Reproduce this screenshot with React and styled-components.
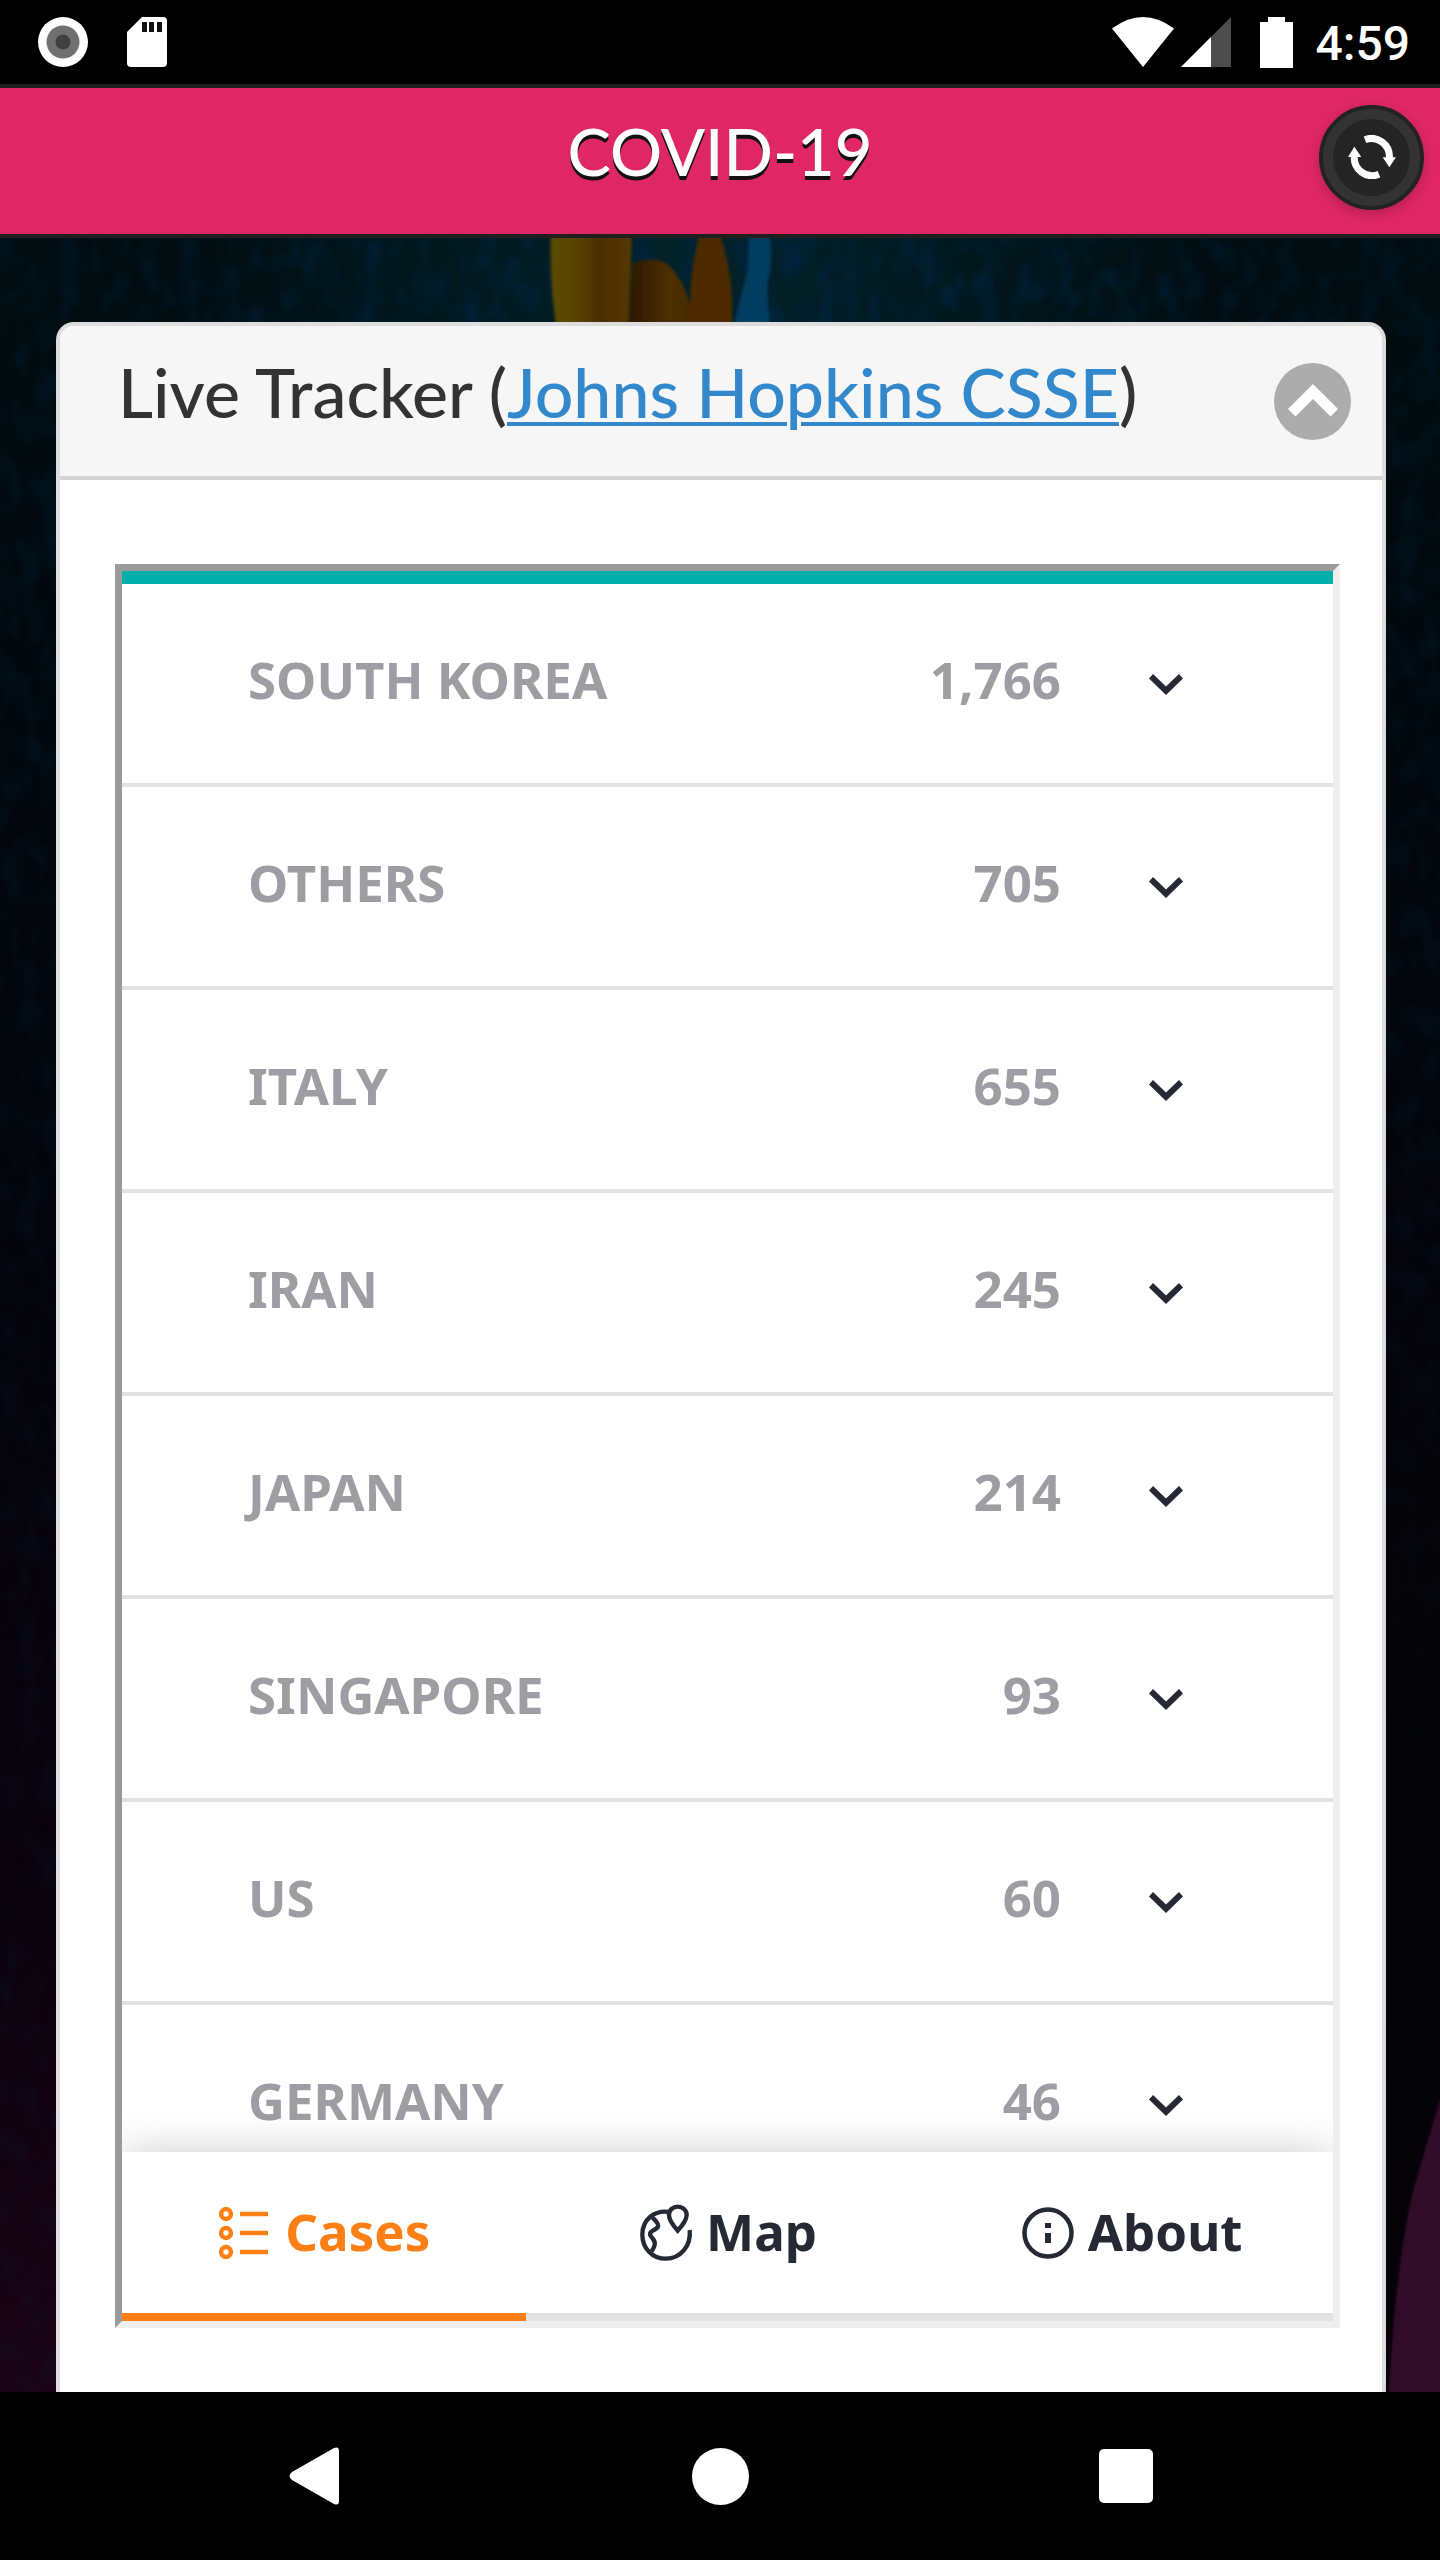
import React, { useState } from "react";
import styled, { createGlobalStyle } from "styled-components";

const colors = {
  pink: "#df2765",
  edge: "#1f1f1f",
  teal: "#00aeaa",
  orange: "#ff7f17",
  ink: "#242933",
  muted: "#9d9da3",
  line: "#e1e3e3",
};

const GlobalStyle = createGlobalStyle`
  *, *::before, *::after { box-sizing: border-box; }
  body { margin: 0; background: #000; }
  button { margin: 0; padding: 0; border: 0; background: none; color: inherit; font: inherit; }
  svg { display: block; }
`;

const Screen = styled.div`
  display: flex;
  flex-direction: column;
  height: 100vh;
  background: #000;
  font-family: "Noto Sans", "Open Sans", sans-serif;
`;

const StatusBar = styled.div`
  flex: none;
  display: flex;
  justify-content: space-between;
  height: 84px;
  padding: 0 30px 0 38px;
  color: #fff;
`;

const StatusGroup = styled.div`
  display: flex;
  align-items: center;
  gap: ${(p) => p.$gap}px;
`;

const Clock = styled.time`
  padding: 4px 0 0 14px;
  font: 500 48px/56px Roboto, sans-serif;
`;

const Header = styled.header`
  flex: none;
  display: grid;
  grid-template-columns: 1fr auto 1fr;
  align-items: center;
  height: 154px;
  padding: 0 16px;
  border-top: 4px solid ${colors.edge};
  border-bottom: 4px solid ${colors.edge};
  background: ${colors.pink};
`;

const Title = styled.h1`
  grid-column: 2;
  margin: 0;
  padding-bottom: 20px;
  color: #fff;
  font: 500 65px/80px Lato, sans-serif;
  text-shadow: 0 4px 0 #111;
`;

const RefreshButton = styled.button`
  justify-self: end;
  display: grid;
  place-items: center;
  width: 105px;
  height: 105px;
  margin-top: -8px;
  border: 4px solid #222;
  border-radius: 50%;
  background: radial-gradient(circle, #242424 38px, #333 39px);
  box-shadow: 0 4px 12px rgba(0, 0, 0, 0.2);
`;

const Main = styled.main`
  position: relative;
  flex: 1 1 0;
  display: flex;
  min-height: 0;
  padding: 84px 54px 0 56px;
  overflow: hidden;
`;

const Backdrop = styled.svg`
  position: absolute;
  inset: 0;
  width: 100%;
  height: 100%;
`;

const Card = styled.section`
  position: relative;
  flex: 1;
  display: flex;
  flex-direction: column;
  min-width: 0;
  border: 4px solid #ddd;
  border-bottom: 0;
  border-radius: 18px 18px 0 0;
  background: #fff;
  overflow: hidden;
`;

const CardHead = styled.div`
  flex: none;
  display: flex;
  align-items: center;
  justify-content: space-between;
  height: 154px;
  padding: 0 31px 0 58px;
  border-bottom: 4px solid #d3d3d3;
  background: #f6f6f6;
`;

const CardTitle = styled.h2`
  margin: 0;
  padding-bottom: 18px;
  color: #333;
  font: 500 68px/80px Lato, sans-serif;
  white-space: nowrap;
`;

const SourceLink = styled.a`
  color: #3388cc;
  text-decoration-thickness: 4px;
  text-underline-offset: 4px;
`;

const CollapseButton = styled.button`
  display: grid;
  place-items: center;
  width: 77px;
  height: 77px;
  border-radius: 50%;
  background: #acacac;
`;

const CardBody = styled.div`
  flex: 1;
  display: flex;
  min-height: 0;
  padding: 84px 42px 64px 55px;
`;

const Frame = styled.div`
  flex: 1;
  display: flex;
  flex-direction: column;
  min-width: 0;
  border: 7px solid;
  border-color: #9a9a9a #eee #eee #9a9a9a;
  overflow: hidden;
`;

const CaseList = styled.ul`
  flex: 1 1 0;
  min-height: 0;
  margin: 0;
  padding: 0;
  border-top: 13px solid ${colors.teal};
  list-style: none;
  overflow: hidden;
`;

const CaseRow = styled.button`
  display: grid;
  grid-template-columns: 1fr auto 36px;
  align-items: center;
  width: 100%;
  height: 203px;
  padding: 0 149px 0 126px;
  border-bottom: 4px solid ${colors.line};
  color: ${colors.muted};
  font-size: 51px;
  font-weight: 700;
  line-height: 72px;
  text-align: left;
`;

const RowText = styled.span`
  padding: 0 ${(p) => (p.$count ? 87 : 0)}px 10px 0;
`;

const Tabs = styled.nav`
  position: relative;
  flex: none;
  display: grid;
  grid-template-columns: repeat(3, 1fr);
  background: #fff;
  box-shadow: 0 0 40px rgba(0, 0, 0, 0.2);
`;

const Tab = styled.button`
  display: flex;
  align-items: center;
  justify-content: center;
  gap: 12px;
  height: 169px;
  border-bottom: 8px solid ${(p) => (p.$active ? colors.orange : "#e0e2e4")};
  color: ${(p) => (p.$active ? colors.orange : colors.ink)};
  font-size: 51px;
  font-weight: 700;
  line-height: 72px;
`;

const TabLabel = styled.span`
  padding-bottom: 3px;
`;

const SystemNav = styled.nav`
  flex: none;
  display: grid;
  grid-template-columns: repeat(3, 406px);
  justify-content: center;
  height: 168px;
  color: #fff;
`;

const SystemButton = styled.button`
  display: grid;
  place-items: center;
`;

const cases = [
  ["SOUTH KOREA", "1,766"],
  ["OTHERS", "705"],
  ["ITALY", "655"],
  ["IRAN", "245"],
  ["JAPAN", "214"],
  ["SINGAPORE", "93"],
  ["US", "60"],
  ["GERMANY", "46"],
];

const RecordIcon = () => (
  <svg width="50" height="50" viewBox="0 0 50 50" aria-hidden="true">
    <circle cx="25" cy="25" r="25" fill="#fff" />
    <circle cx="25" cy="25" r="16.5" fill="#707070" />
    <circle cx="25" cy="25" r="7.5" fill="#404040" />
  </svg>
);

const SdCardIcon = () => (
  <svg width="40" height="50" viewBox="0 0 40 50" aria-hidden="true">
    <path d="M15 0H36Q40 0 40 4V46Q40 50 36 50H4Q0 50 0 46V15Z" fill="#fff" />
    <path d="M15 5h5v10h-5zM22 5h5v10h-5zM30 5h5v10h-5z" fill="#111" />
  </svg>
);

const WifiIcon = () => (
  <svg width="62" height="50" viewBox="0 0 62 50" aria-hidden="true">
    <path d="M0 11.500Q31-11.500 62 11.500L31 50Z" fill="#fff" />
  </svg>
);

const SignalIcon = () => (
  <svg width="50" height="50" viewBox="0 0 50 50" aria-hidden="true">
    <path d="M50 0V50H0Z" fill="#4d4d4d" />
    <path d="M30 20V50H0Z" fill="#fff" />
  </svg>
);

const BatteryIcon = () => (
  <svg width="57" height="51" viewBox="0 0 57 51" aria-hidden="true">
    <path d="M22 5h8V0h17v5h8v46H22z" fill="#fff" />
  </svg>
);

const RefreshIcon = () => (
  <svg width="48" height="44" viewBox="84 121 144 132" aria-hidden="true">
    <path
      d="M135 135A54 54 0 0 1 208 190M177 239A54 54 0 0 1 103 184"
      fill="none"
      stroke="#fff"
      strokeWidth="21"
    />
    <path d="M188 188H228L208 218ZM84 187H124L103 156Z" fill="#fff" />
  </svg>
);

const CollapseIcon = () => (
  <svg width="50" height="34" viewBox="0 0 50 34" aria-hidden="true">
    <path d="M25 0L50 25L42.500 32.500L25 15L7.500 32.500L0 25Z" fill="#fff" />
  </svg>
);

const RowChevron = () => (
  <svg width="36" height="22" viewBox="0 0 36 22" aria-hidden="true">
    <path d="M5 1L18 13.500L31 1L35 5.500L18 22L1 5.500Z" fill={colors.ink} />
  </svg>
);

const CasesIcon = () => (
  <svg width="56" height="52" viewBox="0 0 56 52" fill="none" stroke="currentColor" aria-hidden="true">
    {[7, 26, 45].map((y) => (
      <g key={y} strokeWidth="4.500">
        <circle cx="9" cy={y} r="4.900" />
        <path d={`M23 ${y}H51`} />
      </g>
    ))}
  </svg>
);

const MapIcon = () => (
  <svg
    width="56"
    height="60"
    viewBox="32 40 168 180"
    fill="none"
    stroke="currentColor"
    strokeWidth="13"
    aria-hidden="true"
  >
    <path d="M187 121C192 168 160 207 116 207C74 207 45 175 45 135C45 88 82 61 125 67" />
    <path d="M151 123C137 107 125 91 125 76C125 61 137 51 151 51C165 51 178 61 178 76C178 92 165 107 151 123Z" />
    <path d="M75 83C98 105 97 113 80 121C65 128 65 135 75 145C87 159 83 169 73 185" />
  </svg>
);

const AboutIcon = () => (
  <svg width="56" height="56" viewBox="0 0 56 56" aria-hidden="true">
    <circle cx="28" cy="28" r="23.500" fill="none" stroke="currentColor" strokeWidth="4.500" />
    <path d="M25 18h6v5h-6zM25 28h6v10h-6z" fill="currentColor" />
  </svg>
);

const BackIcon = () => (
  <svg width="50" height="58" viewBox="0 0 50 58" fill="#fff" aria-hidden="true">
    <path d="M45 1Q50-1 50 4V54Q50 59 45 57L3 33Q-2 29 3 25Z" />
  </svg>
);

const HomeIcon = () => (
  <svg width="57" height="57" viewBox="0 0 57 57" fill="#fff" aria-hidden="true">
    <circle cx="28.500" cy="28.500" r="28.500" />
  </svg>
);

const RecentsIcon = () => (
  <svg width="54" height="54" viewBox="0 0 54 54" fill="#fff" aria-hidden="true">
    <rect width="54" height="54" rx="5" />
  </svg>
);

const ReefBackdrop = () => (
  <Backdrop viewBox="0 0 1440 2154" preserveAspectRatio="none" aria-hidden="true">
    <defs>
      <linearGradient id="depth" x1="0" y1="0" x2="0" y2="1">
        <stop offset="0" stopColor="#010d10" />
        <stop offset="0.2" stopColor="#02080c" />
        <stop offset="0.5" stopColor="#05040b" />
        <stop offset="0.78" stopColor="#0b020b" />
        <stop offset="1" stopColor="#1b0315" />
      </linearGradient>
      <linearGradient id="shade" x1="0" y1="0" x2="0" y2="1">
        <stop offset="0" stopColor="#030407" stopOpacity="0" />
        <stop offset="0.5" stopColor="#030407" />
        <stop offset="1" stopColor="#060208" />
      </linearGradient>
      <radialGradient id="glow" gradientUnits="userSpaceOnUse" cx="700" cy="40" r="520">
        <stop offset="0" stopColor="#02232a" />
        <stop offset="1" stopColor="#02232a" stopOpacity="0" />
      </radialGradient>
      <radialGradient id="speckFade" gradientUnits="userSpaceOnUse" cx="720" cy="0" r="1100">
        <stop offset="0" stopColor="#fff" />
        <stop offset="0.5" stopColor="#666" />
        <stop offset="1" stopColor="#333" />
      </radialGradient>
      <mask id="speckMask">
        <rect width="1440" height="2154" fill="url(#speckFade)" />
      </mask>
      <linearGradient id="stalk" x1="0" x2="1">
        <stop offset="0" stopColor="#5c4a00" />
        <stop offset="0.3" stopColor="#5a4300" />
        <stop offset="0.6" stopColor="#4c2e00" />
        <stop offset="1" stopColor="#553800" />
      </linearGradient>
      <linearGradient id="bud" x1="0" x2="1">
        <stop offset="0" stopColor="#2c1700" />
        <stop offset="0.6" stopColor="#4d3000" />
        <stop offset="1" stopColor="#4a2a00" />
      </linearGradient>
      <filter id="specks" x="0" y="0" width="100%" height="100%" colorInterpolationFilters="sRGB">
        <feTurbulence type="fractalNoise" baseFrequency="0.05 0.03" numOctaves="2" seed="4" />
        <feColorMatrix values="0 0 0 0 0  0 0 0 0 0.14  0 0 0 0 0.24  2.400 0 0 0 -0.950" />
      </filter>
      <filter id="soft">
        <feGaussianBlur stdDeviation="1.500" />
      </filter>
    </defs>
    <rect width="1440" height="2154" fill="url(#depth)" />
    <rect width="1440" height="400" fill="url(#glow)" />
    <g mask="url(#speckMask)">
      <rect width="1440" height="2154" filter="url(#specks)" />
    </g>
    <rect x="1384" y="1000" width="56" height="1154" fill="url(#shade)" />
    <g filter="url(#soft)">
      <path d="M551-6H632Q630 50 628 100H558Q549 50 551-6Z" fill="url(#stalk)" />
      <path d="M629 100L632 26Q648 18 664 24Q690 42 696 100Z" fill="url(#bud)" />
      <path d="M700-6H719Q736 40 731 100H693Q685 50 700-6Z" fill="#4d2a00" />
      <path d="M749-6H769Q774 18 768 44Q766 70 773 100H730Q742 56 748 30Z" fill="#043e60" />
      <path d="M1450 1830Q1428 1900 1414 1950Q1396 2020 1388 2165H1450Z" fill="#310a2a" />
    </g>
  </Backdrop>
);

const tabs = [
  ["Cases", CasesIcon],
  ["Map", MapIcon],
  ["About", AboutIcon],
];

export default function App() {
  const [active, setActive] = useState("Cases");
  return (
    <Screen>
      <GlobalStyle />
      <StatusBar>
        <StatusGroup $gap={39}>
          <RecordIcon />
          <SdCardIcon />
        </StatusGroup>
        <StatusGroup $gap={7}>
          <WifiIcon />
          <SignalIcon />
          <BatteryIcon />
          <Clock>4:59</Clock>
        </StatusGroup>
      </StatusBar>
      <Header>
        <Title>COVID-19</Title>
        <RefreshButton aria-label="Refresh">
          <RefreshIcon />
        </RefreshButton>
      </Header>
      <Main>
        <ReefBackdrop />
        <Card>
          <CardHead>
            <CardTitle>
              Live Tracker (<SourceLink href="#csse">Johns Hopkins CSSE</SourceLink>)
            </CardTitle>
            <CollapseButton aria-label="Collapse">
              <CollapseIcon />
            </CollapseButton>
          </CardHead>
          <CardBody>
            <Frame>
              <CaseList>
                {cases.map(([place, count]) => (
                  <li key={place}>
                    <CaseRow aria-expanded="false">
                      <RowText>{place}</RowText>
                      <RowText $count>{count}</RowText>
                      <RowChevron />
                    </CaseRow>
                  </li>
                ))}
              </CaseList>
              <Tabs>
                {tabs.map(([label, Icon]) => (
                  <Tab key={label} $active={label === active} onClick={() => setActive(label)}>
                    <Icon />
                    <TabLabel>{label}</TabLabel>
                  </Tab>
                ))}
              </Tabs>
            </Frame>
          </CardBody>
        </Card>
      </Main>
      <SystemNav>
        <SystemButton aria-label="Back">
          <BackIcon />
        </SystemButton>
        <SystemButton aria-label="Home">
          <HomeIcon />
        </SystemButton>
        <SystemButton aria-label="Recent apps">
          <RecentsIcon />
        </SystemButton>
      </SystemNav>
    </Screen>
  );
}
